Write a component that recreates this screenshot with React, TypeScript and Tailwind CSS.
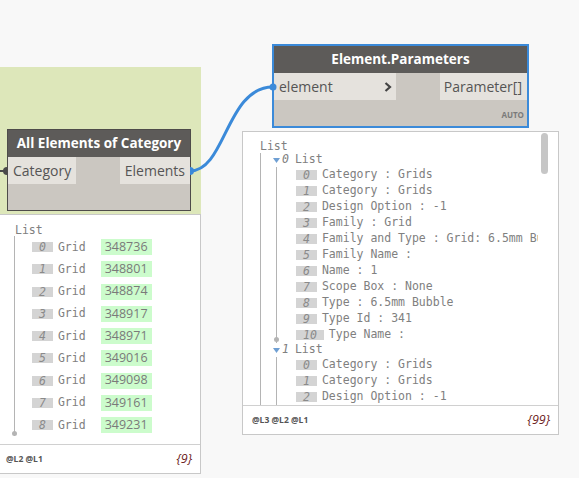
import React from "react";

const gridIds = ["348736", "348801", "348874", "348917", "348971", "349016", "349098", "349161", "349231"];

const params0 = [
  "Category : Grids",
  "Category : Grids",
  "Design Option : -1",
  "Family : Grid",
  "Family and Type : Grid: 6.5mm Bubble",
  "Family Name :",
  "Name : 1",
  "Scope Box : None",
  "Type : 6.5mm Bubble",
  "Type Id : 341",
  "Type Name :",
];

const params1 = ["Category : Grids", "Category : Grids", "Design Option : -1"];

function IndexBox({ i }: { i: number }) {
  return (
    <span className="inline-flex h-[10px] items-center bg-[#d4d4d4] px-[7px] italic leading-[10px] text-[#8a8a8a]">
      {i}
    </span>
  );
}

function Footer({ levels, count }: { levels: string; count: string }) {
  return (
    <div className="flex h-[29px] shrink-0 items-center justify-between border-t border-[#d0d0d0] pl-[9px] pr-[8px]">
      <div className="font-['Open_Sans',sans-serif] text-[8.5px] font-bold text-[#555]">{levels}</div>
      <div className="font-['Open_Sans',sans-serif] text-[12.5px] italic text-[#6e2424]">{count}</div>
    </div>
  );
}

function Triangle() {
  return (
    <svg width="7" height="5" viewBox="0 0 7 5" className="shrink-0">
      <path d="M0 0 L7 0 L3.5 5 Z" fill="#6f9fd3" />
    </svg>
  );
}

export default function App() {
  return (
    <div className="relative h-[478px] w-[579px] overflow-hidden bg-[#f8f8f8] font-['Open_Sans',sans-serif]">
      {/* green group */}
      <div className="absolute left-0 top-[67px] h-[148px] w-[201px] bg-[#dde7ba]" />

      {/* Node: All Elements of Category */}
      <div className="absolute left-[7px] top-[129px] flex h-[82px] w-[184px] flex-col border border-[#4e4c4a] bg-[#cbc7c1]">
        <div className="flex h-[27px] items-center justify-center bg-[#5d5b59] text-[13.5px] font-bold text-white">
          All Elements of Category
        </div>
        <div className="flex h-[27px] justify-between">
          <div className="flex w-[68px] items-center bg-[#e5e2dd] pl-[5px] text-[14px] text-[#555]">Category</div>
          <div className="flex w-[70px] items-center justify-end bg-[#e5e2dd] pr-[5px] text-[14px] text-[#555]">Elements</div>
        </div>
        <div className="flex-1" />
      </div>

      {/* Node: Element.Parameters */}
      <div className="absolute left-[272px] top-[44px] flex h-[84px] w-[257px] flex-col border-2 border-[#3b8ad9] bg-[#cbc7c1]">
        <div className="flex h-[27px] items-center justify-center bg-[#5d5b59] text-[13.5px] font-bold text-white">
          Element.Parameters
        </div>
        <div className="flex h-[27px] justify-between">
          <div className="flex w-[122px] items-center justify-between bg-[#e5e2dd] pl-[5px] pr-[4px] text-[14px] text-[#555]">
            <span>element</span>
            <svg width="8" height="10" viewBox="0 0 8 10">
              <path d="M1.5 1 L6 5 L1.5 9" fill="none" stroke="#444" strokeWidth="2.2" />
            </svg>
          </div>
          <div className="flex w-[87px] items-center justify-end bg-[#e5e2dd] pr-[5px] text-[14px] text-[#555]">
            Parameter[]
          </div>
        </div>
        <div className="flex flex-1 items-center justify-end pr-[3px] pt-[3px] text-[8px] font-bold text-[#7a7a7a]">
          AUTO
        </div>
      </div>

      {/* Left preview */}
      <div className="absolute left-[-4px] top-[214px] flex h-[260px] w-[205px] flex-col border border-[#c8c8c8] bg-white">
        <div className="min-h-0 flex-1 overflow-hidden pl-[18px] pt-[9px] font-['DejaVu_Sans_Mono',monospace] text-[11.5px] text-[#808080]">
          <div className="h-[12px] leading-[12px]">List</div>
          <div className="relative -ml-[1px] border-l border-[#b4b4b4] pl-[17px]">
            {gridIds.map((id, i) => (
              <div key={id} className="flex h-[22.25px] items-center whitespace-nowrap">
                <IndexBox i={i} />
                <span className="ml-[5px]">Grid</span>
                <span className="ml-[15px] flex h-[16px] w-[51px] items-center bg-[#ccfccc] pl-[4px] font-['Open_Sans',sans-serif] text-[12.5px] text-[#7a7a7a]">
                  {id}
                </span>
              </div>
            ))}
            <div className="absolute -left-[3px] bottom-0 h-[5px] w-[5px] rounded-full bg-[#b4b4b4]" />
          </div>
        </div>
        <Footer levels="@L2 @L1" count="{9}" />
      </div>

      {/* Right preview */}
      <div className="absolute left-[242px] top-[131px] flex h-[304px] w-[317px] flex-col border border-[#c8c8c8] bg-white">
        <div className="flex min-h-0 flex-1">
          <div className="min-w-0 flex-1 overflow-hidden pl-[17px] pt-[7px] font-['DejaVu_Sans_Mono',monospace] text-[11.5px] text-[#808080]">
            <div className="h-[14px] leading-[14px]">List</div>
            <div className="border-l border-[#b4b4b4]">
              <div className="flex h-[14px] items-center whitespace-nowrap pl-[12px]">
                <Triangle />
                <span className="ml-[2px] italic">0</span>
                <span className="ml-[6px]">List</span>
              </div>
              <div className="relative ml-[15px] border-l border-[#b4b4b4] pl-[19px]">
                {params0.map((p, i) => (
                  <div key={i} className="flex h-[16px] items-center whitespace-nowrap">
                    <IndexBox i={i} />
                    <span className="ml-[5px]">{p}</span>
                  </div>
                ))}
                <div className="absolute -left-[3px] bottom-[1px] h-[5px] w-[5px] rounded-full bg-[#b4b4b4]" />
              </div>
              <div className="flex h-[14px] items-center whitespace-nowrap pl-[12px]">
                <Triangle />
                <span className="ml-[2px] italic">1</span>
                <span className="ml-[6px]">List</span>
              </div>
              <div className="relative ml-[15px] h-[52px] border-l border-[#b4b4b4] pl-[19px]">
                {params1.map((p, i) => (
                  <div key={i} className="flex h-[16px] items-center whitespace-nowrap">
                    <IndexBox i={i} />
                    <span className="ml-[5px]">{p}</span>
                  </div>
                ))}
              </div>
            </div>
          </div>
          <div className="w-[20px] shrink-0 pl-[3px] pt-[1px]">
            <div className="h-[41px] w-[7px] rounded-full bg-[#c6c6c6]" />
          </div>
        </div>
        <Footer levels="@L3 @L2 @L1" count="{99}" />
      </div>

      {/* wires */}
      <svg className="pointer-events-none absolute left-0 top-0" width="579" height="478" viewBox="0 0 579 478">
        <path d="M0 171 L4 171" stroke="#4a4a4a" strokeWidth="2" fill="none" />
        <path d="M7 167 A4 4 0 0 0 7 175 Z" fill="#4a4a4a" />
        <path d="M190 171 C 226 171, 226 87, 273 87" stroke="#3b8ad9" strokeWidth="3" fill="none" />
        <path d="M190 167 A4 4 0 0 1 190 175 Z" fill="#3b8ad9" />
        <circle cx="273" cy="87" r="3.5" fill="#3b8ad9" />
      </svg>
    </div>
  );
}
